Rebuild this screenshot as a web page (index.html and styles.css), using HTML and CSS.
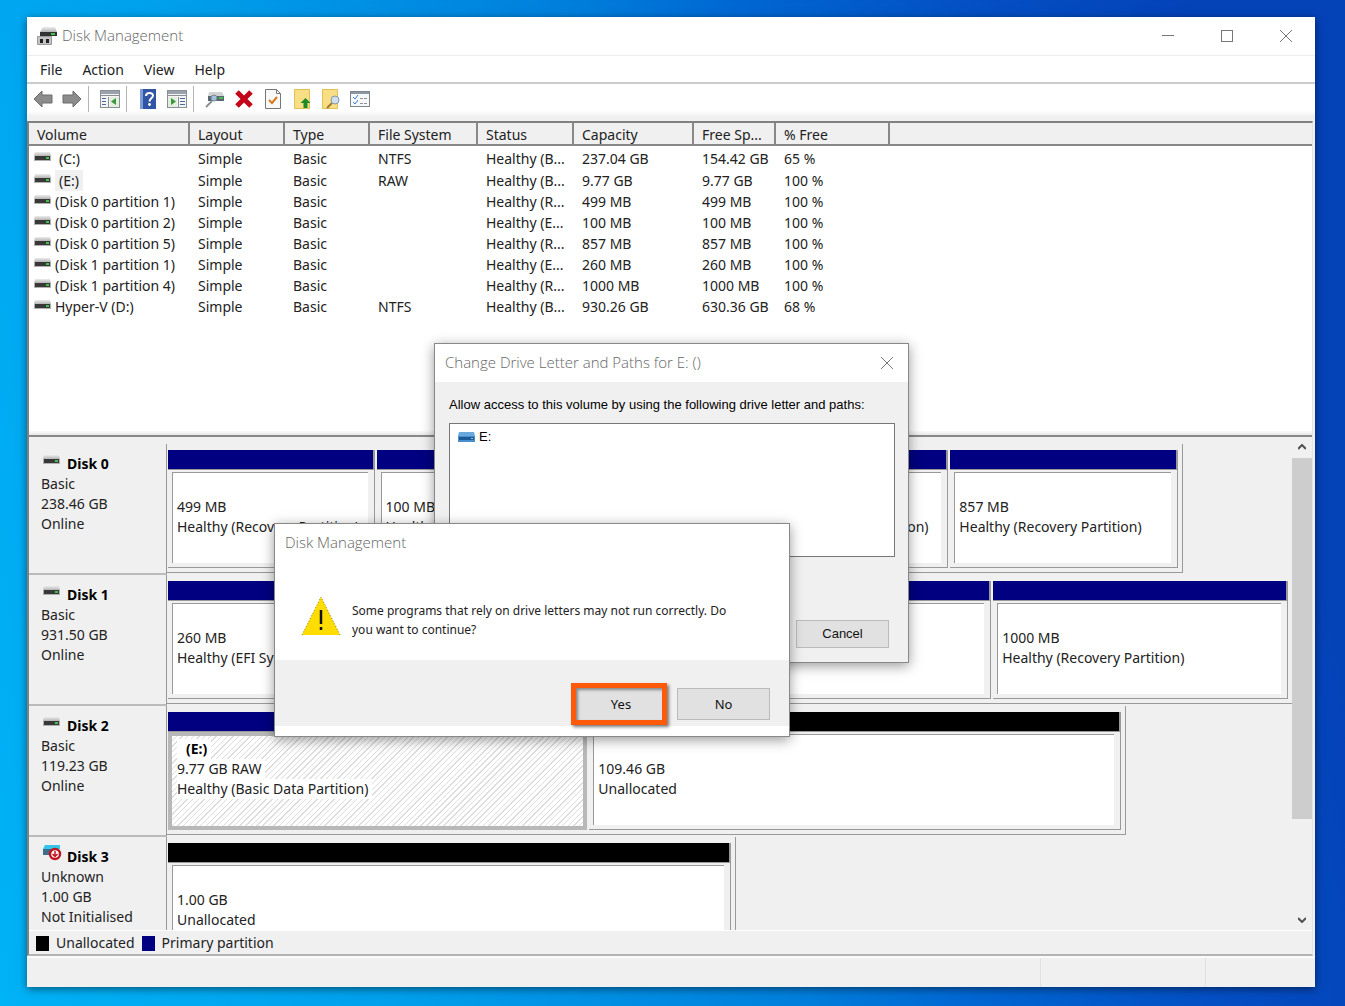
FILE: index.html
```html
<!DOCTYPE html>
<html lang="en">
<head>
    <meta charset="utf-8">
    <title>Disk Management</title>
    <link rel="stylesheet" href="styles.css">
</head>
<body>
    <svg class="sprite" width="0" height="0">
        <defs>
            <linearGradient id="metal" x1="0" y1="0" x2="0" y2="1">
                <stop offset="0" stop-color="#ececec"/>
                <stop offset="1" stop-color="#b4b4b4"/>
            </linearGradient>
        </defs>
        <symbol id="drive" viewBox="0 0 17 9">
            <path d="M1 0h15l1 4H0z" fill="url(#metal)"/>
            <rect x="0" y="4" width="17" height="5" fill="#b0b0b0"/>
            <rect x="1" y="4" width="15" height="4" fill="#383838"/>
            <rect x="12" y="5" width="3" height="2" fill="#3fc24a"/>
        </symbol>
        <symbol id="cross" viewBox="0 0 12 12">
            <path d="M0 0L12 12M12 0L0 12" stroke="#777" fill="none"/>
        </symbol>
    </svg>

    <div class="window">
        <div class="titlebar">
            <svg class="app-icon" width="20" height="19" viewBox="0 0 20 19">
                <path d="M6 0h12l2 5H3z" fill="url(#metal)"/>
                <rect x="3" y="5" width="17" height="4" fill="#333"/>
                <rect x="14" y="6" width="4" height="2" fill="#3fc24a"/>
                <path d="M.5 9.500h14v8H.5z" fill="#c4c4c4" stroke="#9a9a9a"/>
                <rect x="3" y="12" width="3" height="4" fill="#222"/>
                <rect x="9" y="12" width="3" height="4" fill="#222"/>
            </svg>
            <span class="title">Disk Management</span>
            <button class="win-btn" aria-label="Minimize"><svg width="12" height="12"><path d="M0 5.500h12" stroke="#777"/></svg></button>
            <button class="win-btn" aria-label="Maximize"><svg width="12" height="12"><rect x=".5" y=".5" width="11" height="11" fill="none" stroke="#777"/></svg></button>
            <button class="win-btn" aria-label="Close"><svg width="12" height="12"><use href="#cross"/></svg></button>
        </div>

        <div class="menubar">
            <button>File</button>
            <button>Action</button>
            <button>View</button>
            <button>Help</button>
        </div>

        <div class="toolbar">
            <button aria-label="Back"><svg width="20" height="18" viewBox="0 0 20 18"><path d="M1 9l8-8v4h10v8H9v4z" fill="#8c8c8c" stroke="#6c6c6c"/></svg></button>
            <button aria-label="Forward"><svg width="20" height="18" viewBox="0 0 20 18"><path d="M19 9l-8-8v4H1v8h10v4z" fill="#8c8c8c" stroke="#6c6c6c"/></svg></button>
            <span class="separator"></span>
            <button aria-label="Show console tree"><svg width="20" height="18" viewBox="0 0 20 18">
                <rect x=".5" y=".5" width="19" height="17" fill="#f4f4f4" stroke="#8a8f96"/>
                <rect x="1" y="1" width="18" height="3" fill="#9aa2ac"/>
                <path d="M1 5.500h18M8.500 7v10" stroke="#8a8f96"/>
                <path d="M2 8.500h4M2 11.500h4M2 14.500h4" stroke="#4a6a9c"/>
                <rect x="10" y="7" width="9" height="10" fill="#e2efe0"/>
                <path d="M16 8v7l-5-3.500z" fill="#3a9a3a"/>
            </svg></button>
            <span class="separator"></span>
            <button aria-label="Help topics"><svg width="18" height="20" viewBox="0 0 18 20">
                <rect x="1" y="0" width="16" height="20" fill="#2f55a4"/>
                <rect x="1" y="0" width="3" height="20" fill="#7d9bd4"/>
                <path d="M7 7c0-4 7-4 7-.500 0 3-3.500 2.500-3.500 6" fill="none" stroke="#fff" stroke-width="2"/>
                <circle cx="10.500" cy="15.500" r="1.400" fill="#fff"/>
            </svg></button>
            <button aria-label="Show action pane"><svg width="20" height="18" viewBox="0 0 20 18">
                <rect x=".5" y=".5" width="19" height="17" fill="#f4f4f4" stroke="#8a8f96"/>
                <rect x="1" y="1" width="18" height="3" fill="#9aa2ac"/>
                <path d="M1 5.500h18M11.500 7v10" stroke="#8a8f96"/>
                <path d="M13 8.500h5M13 11.500h5M13 14.500h5" stroke="#4a6a9c"/>
                <rect x="1" y="7" width="9" height="10" fill="#e2efe0"/>
                <path d="M4 8v7l5-3.500z" fill="#3a9a3a"/>
            </svg></button>
            <span class="separator"></span>
            <button aria-label="Rescan disks"><svg width="20" height="18" viewBox="0 0 20 18">
                <path d="M4 2h13l2 4H3z" fill="#d2d2d2"/>
                <rect x="3" y="6" width="16" height="5" fill="#5a6670"/>
                <rect x="14" y="7" width="4" height="2" fill="#3fc24a"/>
                <path d="M1 17l6-6" stroke="#8a9097" stroke-width="2"/>
                <circle cx="9" cy="8" r="3" fill="#9cc3de" stroke="#7b8790"/>
            </svg></button>
            <button aria-label="Delete"><svg width="18" height="18" viewBox="0 0 18 18"><path d="M2 2l14 14M16 2L2 16" stroke="#c4061a" stroke-width="5"/></svg></button>
            <button aria-label="Properties"><svg width="16" height="20" viewBox="0 0 16 20">
                <path d="M.5.5h11l4 4v15H.5z" fill="#f8f8f8" stroke="#777"/>
                <path d="M11.500.5v4h4" fill="none" stroke="#777"/>
                <path d="M4 11l3 3 5-6" fill="none" stroke="#d9791c" stroke-width="2"/>
            </svg></button>
            <button aria-label="Open"><svg width="17" height="20" viewBox="0 0 17 20">
                <path d="M.5.5h15v19H.5z" fill="#f8df86" stroke="#e2bf52"/>
                <path d="M11.500 9l5 5h-3v5h-4v-5h-3z" fill="#1f8a2a"/>
            </svg></button>
            <button aria-label="Find"><svg width="18" height="20" viewBox="0 0 18 20">
                <path d="M.5.5h15v19H.5z" fill="#f8df86" stroke="#e2bf52"/>
                <path d="M5 19l5-5" stroke="#a5752e" stroke-width="2"/>
                <circle cx="13" cy="11" r="4" fill="#cfdfee" stroke="#8797a8"/>
            </svg></button>
            <button aria-label="Settings"><svg width="20" height="16" viewBox="0 0 20 16">
                <rect x=".5" y=".5" width="19" height="15" fill="#f6f8fa" stroke="#7c848e"/>
                <rect x="1" y="1" width="18" height="2" fill="#8d97a3"/>
                <path d="M3 6l2 2 3-4M3 11l2 2 3-4" fill="none" stroke="#3a7cc4"/>
                <path d="M10 7.500h3M14 7.500h3M10 12.500h3M14 12.500h3" stroke="#8a9097"/>
            </svg></button>
        </div>

        <div class="content">
            <div class="volumes">
                <table>
                    <colgroup>
                        <col class="c-volume"><col class="c-layout"><col class="c-type"><col class="c-fs">
                        <col class="c-status"><col class="c-capacity"><col class="c-free"><col class="c-percent"><col>
                    </colgroup>
                    <thead>
                        <tr>
                            <th>Volume</th>
                            <th>Layout</th>
                            <th>Type</th>
                            <th>File System</th>
                            <th>Status</th>
                            <th>Capacity</th>
                            <th>Free Sp...</th>
                            <th>% Free</th>
                            <th></th>
                        </tr>
                    </thead>
                    <tbody>
                        <tr>
                            <td><svg class="drive"><use href="#drive"/></svg><span class="letter">(C:)</span></td>
                            <td>Simple</td><td>Basic</td><td>NTFS</td><td>Healthy (B...</td><td>237.04 GB</td><td>154.42 GB</td><td>65 %</td><td></td>
                        </tr>
                        <tr>
                            <td><svg class="drive"><use href="#drive"/></svg><span class="letter selected">(E:)</span></td>
                            <td>Simple</td><td>Basic</td><td>RAW</td><td>Healthy (B...</td><td>9.77 GB</td><td>9.77 GB</td><td>100 %</td><td></td>
                        </tr>
                        <tr>
                            <td><svg class="drive"><use href="#drive"/></svg>(Disk 0 partition 1)</td>
                            <td>Simple</td><td>Basic</td><td></td><td>Healthy (R...</td><td>499 MB</td><td>499 MB</td><td>100 %</td><td></td>
                        </tr>
                        <tr>
                            <td><svg class="drive"><use href="#drive"/></svg>(Disk 0 partition 2)</td>
                            <td>Simple</td><td>Basic</td><td></td><td>Healthy (E...</td><td>100 MB</td><td>100 MB</td><td>100 %</td><td></td>
                        </tr>
                        <tr>
                            <td><svg class="drive"><use href="#drive"/></svg>(Disk 0 partition 5)</td>
                            <td>Simple</td><td>Basic</td><td></td><td>Healthy (R...</td><td>857 MB</td><td>857 MB</td><td>100 %</td><td></td>
                        </tr>
                        <tr>
                            <td><svg class="drive"><use href="#drive"/></svg>(Disk 1 partition 1)</td>
                            <td>Simple</td><td>Basic</td><td></td><td>Healthy (E...</td><td>260 MB</td><td>260 MB</td><td>100 %</td><td></td>
                        </tr>
                        <tr>
                            <td><svg class="drive"><use href="#drive"/></svg>(Disk 1 partition 4)</td>
                            <td>Simple</td><td>Basic</td><td></td><td>Healthy (R...</td><td>1000 MB</td><td>1000 MB</td><td>100 %</td><td></td>
                        </tr>
                        <tr>
                            <td><svg class="drive"><use href="#drive"/></svg>Hyper-V (D:)</td>
                            <td>Simple</td><td>Basic</td><td>NTFS</td><td>Healthy (B...</td><td>930.26 GB</td><td>630.36 GB</td><td>68 %</td><td></td>
                        </tr>
                    </tbody>
                </table>
            </div>

            <div class="splitter"></div>

            <div class="graphical">
                <div class="disks">
                    <div class="disk">
                        <div class="disk-info">
                            <h3><svg class="drive"><use href="#drive"/></svg>Disk 0</h3>
                            <p>Basic</p><p>238.46 GB</p><p>Online</p>
                        </div>
                        <div class="track-area">
                            <div class="track" style="width: 90.3%">
                                <div class="partition" style="flex-grow: 206"><div class="bar"></div><div class="box"><b></b><p>499 MB</p><p>Healthy (Recovery Partition)</p></div></div>
                                <div class="partition" style="flex-grow: 155"><div class="bar"></div><div class="box"><b></b><p>100 MB</p><p>Healthy (EFI System Partition)</p></div></div>
                                <div class="partition" style="flex-grow: 414"><div class="bar"></div><div class="box"><b></b><p></p><p>Healthy (Boot, Page File, Crash Dump, Basic Data Partition)</p></div></div>
                                <div class="partition" style="flex-grow: 227"><div class="bar"></div><div class="box"><b></b><p>857 MB</p><p>Healthy (Recovery Partition)</p></div></div>
                            </div>
                        </div>
                    </div>
                    <div class="disk">
                        <div class="disk-info">
                            <h3><svg class="drive"><use href="#drive"/></svg>Disk 1</h3>
                            <p>Basic</p><p>931.50 GB</p><p>Online</p>
                        </div>
                        <div class="track-area">
                            <div class="track" style="width: 100.1%">
                                <div class="partition" style="flex-grow: 262"><div class="bar"></div><div class="box"><b></b><p>260 MB</p><p>Healthy (EFI System Partition)</p></div></div>
                                <div class="partition" style="flex-grow: 560"><div class="bar"></div><div class="box"></div></div>
                                <div class="partition" style="flex-grow: 295"><div class="bar"></div><div class="box"><b></b><p>1000 MB</p><p>Healthy (Recovery Partition)</p></div></div>
                            </div>
                        </div>
                    </div>
                    <div class="disk">
                        <div class="disk-info">
                            <h3><svg class="drive"><use href="#drive"/></svg>Disk 2</h3>
                            <p>Basic</p><p>119.23 GB</p><p>Online</p>
                        </div>
                        <div class="track-area">
                            <div class="track" style="width: 85.2%">
                                <div class="partition active" style="flex-grow: 420"><div class="bar"></div><div class="box"><b>(E:)</b><p>9.77 GB RAW</p><p>Healthy (Basic Data Partition)</p></div></div>
                                <div class="partition free" style="flex-grow: 531"><div class="bar"></div><div class="box"><b></b><p>109.46 GB</p><p>Unallocated</p></div></div>
                            </div>
                        </div>
                    </div>
                    <div class="disk">
                        <div class="disk-info">
                            <h3><svg class="drive-unknown" width="19" height="17" viewBox="0 0 19 17">
                                <path d="M2 0h15v4H0z" fill="#35c3ea"/>
                                <rect x="0" y="4" width="9" height="6" fill="#3d6f8c"/>
                                <circle cx="12" cy="9" r="5" fill="#fff" stroke="#c01420" stroke-width="2.500"/>
                                <path d="M12 6v5M9.500 9l2.500 2.500L14.500 9" fill="none" stroke="#c01420" stroke-width="1.500"/>
                            </svg>Disk 3</h3>
                            <p>Unknown</p><p>1.00 GB</p><p>Not Initialised</p>
                        </div>
                        <div class="track-area">
                            <div class="track" style="width: 50.6%">
                                <div class="partition free" style="flex-grow: 1"><div class="bar"></div><div class="box"><b></b><p>1.00 GB</p><p>Unallocated</p></div></div>
                            </div>
                        </div>
                    </div>
                </div>
                <div class="scrollbar">
                    <button aria-label="Scroll up"><svg width="8" height="6"><path d="M0 5l4-4 4 4" fill="none" stroke="#505050" stroke-width="2"/></svg></button>
                    <div class="rail"><div class="thumb"></div></div>
                    <button aria-label="Scroll down"><svg width="8" height="6"><path d="M0 1l4 4 4-4" fill="none" stroke="#505050" stroke-width="2"/></svg></button>
                </div>
            </div>

            <div class="legend">
                <span class="swatch unallocated"></span>Unallocated
                <span class="swatch primary"></span>Primary partition
            </div>
        </div>

        <div class="statusbar"><span></span><span></span><span></span></div>
    </div>

    <div class="dialog paths-dialog" role="dialog" aria-labelledby="pathsTitle">
        <div class="dialog-title">
            <span class="title" id="pathsTitle">Change Drive Letter and Paths for E: ()</span>
            <button aria-label="Close dialog"><svg width="12" height="12"><use href="#cross"/></svg></button>
        </div>
        <div class="paths-body">
            <p id="pathsLabel">Allow access to this volume by using the following drive letter and paths:</p>
            <ul class="path-list" aria-labelledby="pathsLabel">
                <li><svg width="17" height="10" viewBox="0 0 17 10"><path d="M1 0h15l1 4H0z" fill="#6aa9dc"/><rect y="4" width="17" height="6" fill="#4a90cc"/><rect x="1" y="5" width="15" height="3" fill="#1f5a96"/><rect x="13" y="6" width="2" height="1" fill="#7fd0f0"/></svg>E:</li>
            </ul>
            <div class="dialog-buttons">
                <button>Cancel</button>
            </div>
        </div>
    </div>

    <div class="dialog confirm-dialog" role="alertdialog" aria-labelledby="confirmTitle">
        <div class="dialog-title"><span class="title" id="confirmTitle">Disk Management</span></div>
        <div class="confirm-body">
            <svg width="40" height="40" viewBox="0 0 40 40">
                <path d="M20 1L39 39H1z" fill="#ffdd00"/>
                <path d="M1 39L20 1L39 39" fill="none" stroke="#8a7600" stroke-dasharray="1 2"/>
                <path d="M20 14v14M20 31v3" stroke="#111" stroke-width="2.500"/>
            </svg>
            <p>Some programs that rely on drive letters may not run correctly. Do you want to continue?</p>
        </div>
        <div class="dialog-footer">
            <button class="highlight">Yes</button>
            <button>No</button>
        </div>
    </div>
</body>
</html>
```

FILE: styles.css
```css
* {
    box-sizing: border-box;
}
body {
    position: relative;
    display: flex;
    height: 100vh;
    margin: 0;
    padding: 17px 30px 19px 27px;
    overflow: hidden;
    font-family: "Noto Sans", "Open Sans", sans-serif;
    font-size: 14px;
    line-height: 20px;
    color: #222;
    background: linear-gradient(77deg, #00b2f6 0%, #00a0ec 25%, #0080dc 50%, #0066d2 62%, #0450c4 76%, #0442b8 90%);
}
h3, p, ul {
    margin: 0;
    padding: 0;
}
button {
    padding: 0;
    border: none;
    background: none;
    font: inherit;
    color: inherit;
}
svg {
    display: block;
    flex: none;
}
.sprite {
    position: absolute;
}
.window {
    flex: 1;
    display: flex;
    flex-direction: column;
    min-width: 0;
    background: #f0f0f0;
    box-shadow: 0 2px 8px rgba(0, 0, 0, 0.5);
}

/* title bar, menu and toolbar */
.titlebar {
    display: flex;
    align-items: center;
    height: 39px;
    padding-left: 10px;
    background: #fff;
    border-bottom: 1px solid #eee;
}
.title {
    flex: 1;
    padding-bottom: 2px;
    font-family: "Open Sans", "Noto Sans", sans-serif;
    font-size: 15px;
    font-weight: 300;
    color: #666;
}
.app-icon {
    margin-right: 5px;
}
.win-btn {
    display: flex;
    justify-content: center;
    width: 59px;
}
.menubar {
    display: flex;
    gap: 20px;
    height: 28px;
    padding: 2px 0 0 13px;
    background: #fff;
    border-bottom: 2px solid #ccc;
}
.toolbar {
    display: flex;
    align-items: center;
    gap: 9px;
    height: 37px;
    padding: 0 6px 7px;
    background: linear-gradient(#fff 27px, #f0f0f0 32px);
}
.toolbar button {
    display: flex;
    justify-content: center;
    width: 20px;
}
.separator {
    width: 1px;
    height: 26px;
    margin: 0 2px 0 -3px;
    background: #b4b4b4;
}

/* volume list */
.content {
    flex: 1;
    display: flex;
    flex-direction: column;
    min-height: 0;
    margin-right: 2px;
    border: 1px solid #888;
    border-top: 2px solid #808080;
    border-left: 2px solid #808080;
    border-right-color: #e4e4e4;
    border-bottom: 2px solid #b4b4b4;
}
.volumes {
    flex: 308;
    min-height: 0;
    background: #fff;
}
table {
    width: 100%;
    table-layout: fixed;
    border-collapse: separate;
    border-spacing: 0;
}
.c-volume { width: 161px; }
.c-layout { width: 95px; }
.c-type { width: 85px; }
.c-fs { width: 108px; }
.c-status { width: 96px; }
.c-capacity { width: 120px; }
.c-free { width: 82px; }
.c-percent { width: 114px; }
th, td {
    padding: 0 0 0 8px;
    text-align: left;
    font-weight: normal;
    white-space: nowrap;
}
th {
    height: 23px;
    padding-top: 3px;
    line-height: 18px;
    background: #f0f0f0;
    border-right: 2px solid #888;
    border-bottom: 2px solid #888;
}
th:last-child {
    border-right: none;
}
td {
    height: 21px;
    line-height: 21px;
}
td:first-child {
    display: flex;
    align-items: center;
    gap: 4px;
    padding-left: 5px;
}
tbody tr:first-child td {
    height: 24px;
}
.drive {
    width: 17px;
    height: 9px;
    margin-bottom: 4px;
}
.letter {
    padding: 0 4px;
}
.selected {
    background: #f0f0f0;
}
.splitter {
    height: 7px;
    background: linear-gradient(#fff, #e8e8e8);
    border-bottom: 2px solid #888;
}

/* graphical view */
.graphical {
    flex: 495;
    display: flex;
    min-height: 0;
    overflow: hidden;
    border-bottom: 1px solid #fff;
}
.disks {
    flex: 1;
    padding-top: 7px;
    min-width: 0;
}
.disk {
    display: flex;
    height: 131px;
}
.disk-info {
    width: 138px;
    padding: 10px 0 0 12px;
    border-right: 1px solid #999;
    border-bottom: 2px solid #bbb;
}
.disk-info h3 {
    display: flex;
    align-items: center;
    gap: 7px;
    height: 20px;
    padding-left: 2px;
    font-size: 14px;
    color: #000;
}
.disk-info .drive {
    margin-bottom: 8px;
}
.disk-info .drive-unknown {
    margin: 0 -2px 6px 0;
}
.track-area {
    flex: 1;
    min-width: 0;
    overflow: hidden;
}
.track {
    display: flex;
    gap: 2px;
    height: 129px;
    padding: 6px 4px 4px 1px;
    border-right: 1px solid #999;
    border-bottom: 1px solid #999;
}
.partition {
    flex: 1 1 0;
    display: flex;
    flex-direction: column;
    min-width: 0;
    border-right: 1px solid #999;
    border-bottom: 1px solid #999;
}
.bar {
    height: 20px;
    background: #000080;
    border-right: 1px solid #999;
    border-bottom: 1px solid #999;
}
.free .bar {
    background: #000;
}
.box {
    flex: 1;
    margin: 2px 6px 4px 4px;
    padding: 4px 0 0 4px;
    overflow: hidden;
    white-space: nowrap;
    background: #fff;
    border-left: 1px solid #999;
    border-top: 1px solid #999;
}
.box b {
    display: block;
    width: fit-content;
    min-height: 20px;
    padding-left: 9px;
    color: #000;
}
.box p {
    width: fit-content;
    min-height: 20px;
}
.active {
    border: none;
}
.active .box {
    margin: 0;
    padding: 3px 0 0 5px;
    border: 4px solid #b8b8b8;
    background: repeating-linear-gradient(135deg, #fff 0, #fff 3px, #ddd 3px, #ddd 4px);
}
.active .box b, .active .box p {
    padding-right: 4px;
    background: #fff;
}
.scrollbar {
    display: flex;
    flex-direction: column;
    width: 20px;
}
.scrollbar button {
    display: flex;
    align-items: center;
    justify-content: center;
    height: 21px;
}
.rail {
    flex: 1;
}
.thumb {
    height: 80%;
    background: #cdcdcd;
}
.legend {
    display: flex;
    align-items: center;
    gap: 7px;
    height: 23px;
    padding: 1px 0 0 7px;
}
.swatch {
    width: 13px;
    height: 15px;
}
.unallocated {
    background: #000;
}
.primary {
    background: #000080;
}
.statusbar {
    display: flex;
    height: 31px;
    border-top: 2px solid #fafafa;
}
.statusbar span {
    width: 109px;
}
.statusbar span:first-child {
    flex: 1;
}
.statusbar span:nth-child(2) {
    width: 166px;
    border: solid #e2e2e2;
    border-width: 0 1px;
}

/* dialogs */
.dialog {
    position: absolute;
    background: #f0f0f0;
    border: 1px solid #888;
    box-shadow: 0 3px 12px rgba(0, 0, 0, 0.4);
}
.dialog-title {
    display: flex;
    align-items: center;
    height: 38px;
    padding: 0 15px 0 10px;
    background: #fff;
}
.dialog button {
    color: #111;
}
.paths-dialog {
    left: 434px;
    top: 343px;
    width: 475px;
    height: 320px;
    font-family: "Liberation Sans", Arial, sans-serif;
    font-size: 13px;
    color: #000;
}
.paths-body {
    padding: 13px 13px 0 14px;
}
.path-list {
    height: 134px;
    margin: 8px 0 63px;
    padding: 3px 8px;
    list-style: none;
    background: #fff;
    border: 1px solid #777;
}
.path-list li {
    display: flex;
    align-items: center;
    gap: 4px;
}
.dialog-buttons {
    display: flex;
    justify-content: flex-end;
    padding-right: 6px;
}
.dialog-buttons button, .dialog-footer button {
    width: 93px;
    height: 28px;
    background: #e1e1e1;
    border: 1px solid #bbb;
}
.confirm-dialog {
    left: 274px;
    top: 523px;
    width: 516px;
    height: 214px;
    background: #fff;
    font-size: 12px;
    line-height: 19px;
}
.confirm-body {
    display: flex;
    gap: 11px;
    height: 98px;
    padding: 34px 40px 0 26px;
}
.confirm-body p {
    padding-top: 5px;
}
.dialog-footer {
    display: flex;
    align-items: center;
    justify-content: flex-end;
    gap: 10px;
    height: 66px;
    padding: 22px 19px 0 0;
    background: #f0f0f0;
}
.dialog-footer button {
    height: 32px;
    font-size: 13px;
}
.dialog-footer .highlight {
    width: 96px;
    height: 42px;
    padding-left: 4px;
    border: 5px solid #ff5a0a;
    box-shadow: 2px 2px 3px rgba(0, 0, 0, 0.5), inset 2px 2px 3px rgba(0, 0, 0, 0.4);
}
```
